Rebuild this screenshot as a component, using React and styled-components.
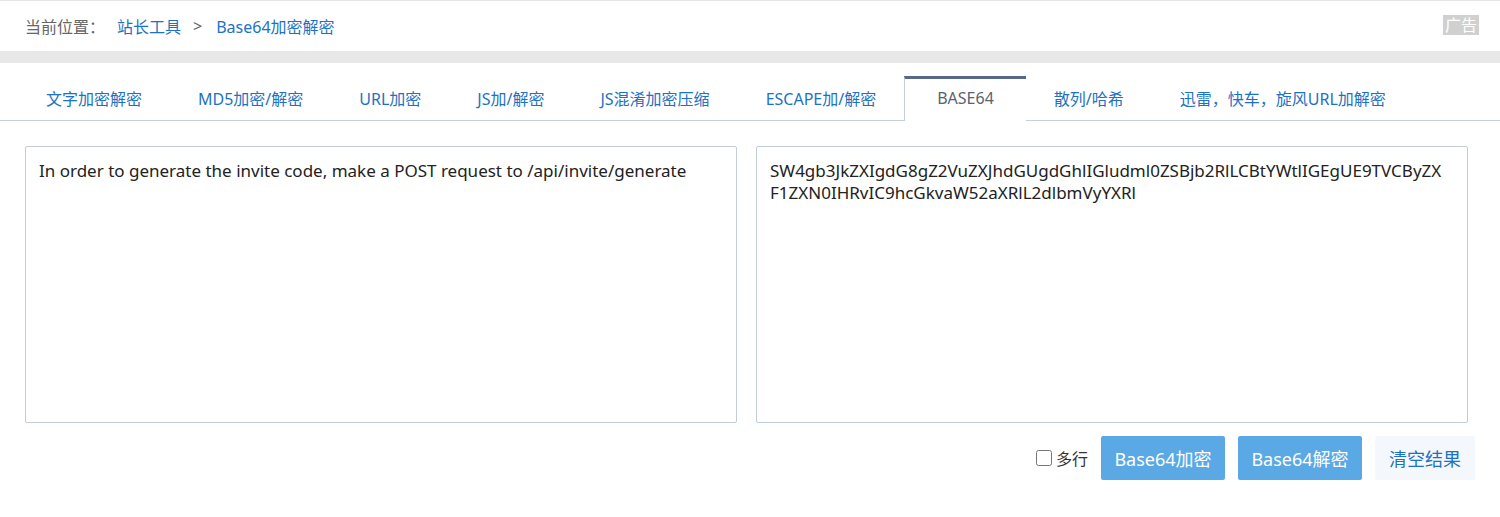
import React, { useState } from 'react';
import styled, { createGlobalStyle } from 'styled-components';

const GlobalStyle = createGlobalStyle`
  html, body {
    margin: 0;
    padding: 0;
    background: #fff;
    font-family: "Noto Sans", "Noto Sans CJK SC", sans-serif;
  }
  * { box-sizing: border-box; }
`;

const Page = styled.div`
  width: 1500px;
  border-top: 1px solid #e6e6e6;
`;

const Crumbs = styled.div`
  display: flex;
  align-items: center;
  justify-content: space-between;
  height: 50px;
  padding: 0 21px 0 25px;
  font-size: 16px;
`;

const Trail = styled.div`
  display: flex;
  align-items: center;
  color: #666;
`;

const CrumbLink = styled.a`
  color: #1d72c2;
  text-decoration: none;
  margin-left: ${(p) => p.$gap || 0}px;
`;

const Sep = styled.span`
  color: #666;
  margin: 0 14px 0 12px;
`;

const Ad = styled.span`
  background: #d0d0d0;
  color: #fff;
  font-size: 16px;
  line-height: 20px;
  padding: 0 2px;
  margin-bottom: 2px;
`;

const Band = styled.div`
  height: 12px;
  background: #e8e8e8;
`;

const TabBar = styled.div`
  display: flex;
  margin-top: 13px;
  padding-left: 18px;
  border-bottom: 1px solid #c5cfdf;
  height: 45px;
`;

const Tab = styled.a`
  display: flex;
  align-items: center;
  padding: 0 ${(p) => (p.$active ? 32 : 27)}px 4px;
  font-size: 16px;
  color: ${(p) => (p.$active ? '#5b6270' : '#1d72c2')};
  white-space: nowrap;
  background: #fff;
  border: 1px solid ${(p) => (p.$active ? '#c5cfdf' : 'transparent')};
  border-top: 3px solid ${(p) => (p.$active ? '#56698a' : 'transparent')};
  border-bottom: none;
  height: ${(p) => (p.$active ? 45 : 44)}px;
  margin-right: ${(p) => (p.$active ? -1 : 0)}px;
  cursor: pointer;
`;

const Panes = styled.div`
  display: grid;
  grid-template-columns: 712px 712px;
  gap: 19px;
  padding: 25px 0 0 25px;
`;

const Box = styled.textarea`
  height: 277px;
  resize: none;
  border: 1px solid #c3ccd9;
  border-radius: 2px;
  padding: 13px 22px 13px 13px;
  font-family: "Noto Sans", "Noto Sans CJK SC", sans-serif;
  font-size: 17px;
  line-height: 22px;
  color: #222;
  outline: none;
`;

const Actions = styled.div`
  display: flex;
  justify-content: flex-end;
  align-items: center;
  gap: 13px;
  padding: 13px 25px 0 0;
`;

const Multi = styled.label`
  display: flex;
  align-items: center;
  gap: 4px;
  font-size: 16px;
  color: #333;
  input {
    width: 16px;
    height: 16px;
    margin: 0;
  }
`;

const Btn = styled.button`
  height: 44px;
  padding: 0;
  width: ${(p) => p.$w}px;
  border: none;
  border-radius: 2px;
  font-family: "Noto Sans", "Noto Sans CJK SC", sans-serif;
  font-size: 18px;
  background: ${(p) => (p.$light ? '#f4f8fc' : '#5aa9e4')};
  color: ${(p) => (p.$light ? '#1d72c2' : '#fff')};
  cursor: pointer;
`;

const tabs = [
  '文字加密解密',
  'MD5加密/解密',
  'URL加密',
  'JS加/解密',
  'JS混淆加密压缩',
  'ESCAPE加/解密',
  'BASE64',
  '散列/哈希',
  '迅雷，快车，旋风URL加解密',
];

const App = () => {
  const [src, setSrc] = useState(
    'In order to generate the invite code, make a POST request to /api/invite/generate'
  );
  const [out, setOut] = useState(
    'SW4gb3JkZXIgdG8gZ2VuZXJhdGUgdGhlIGludml0ZSBjb2RlLCBtYWtlIGEgUE9TVCByZXF1ZXN0IHRvIC9hcGkvaW52aXRlL2dlbmVyYXRl'
  );

  return (
    <Page>
      <GlobalStyle />
      <Crumbs>
        <Trail>
          当前位置：
          <CrumbLink $gap={12}>站长工具</CrumbLink>
          <Sep>&gt;</Sep>
          <CrumbLink>Base64加密解密</CrumbLink>
        </Trail>
        <Ad>广告</Ad>
      </Crumbs>
      <Band />
      <TabBar>
        {tabs.map((t) => (
          <Tab key={t} $active={t === 'BASE64'}>
            {t}
          </Tab>
        ))}
      </TabBar>
      <Panes>
        <Box value={src} onChange={(e) => setSrc(e.target.value)} />
        <Box value={out} onChange={(e) => setOut(e.target.value)} />
      </Panes>
      <Actions>
        <Multi>
          <input type="checkbox" />
          多行
        </Multi>
        <Btn $w={124}>Base64加密</Btn>
        <Btn $w={124}>Base64解密</Btn>
        <Btn $w={100} $light>
          清空结果
        </Btn>
      </Actions>
    </Page>
  );
};

export default App;
